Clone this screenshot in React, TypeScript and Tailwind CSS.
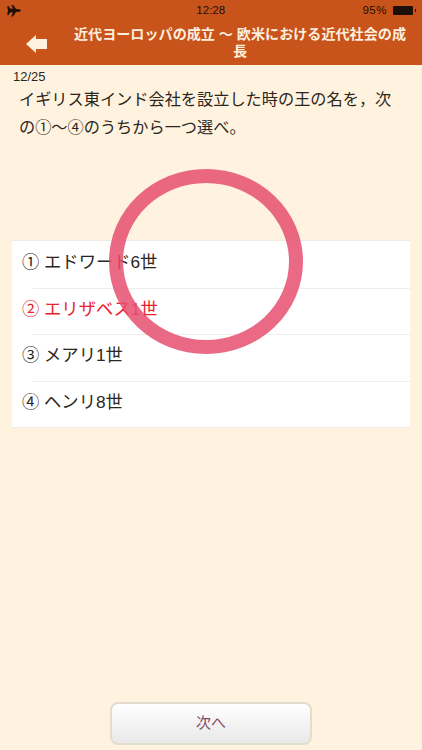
const font = { fontFamily: '"Liberation Sans", "Noto Sans CJK JP", sans-serif' };

const choices = [
  { label: '① エドワード6世', correct: false },
  { label: '② エリザベス1世', correct: true },
  { label: '③ メアリ1世', correct: false },
  { label: '④ ヘンリ8世', correct: false },
];

function Plane() {
  return (
    <svg width="14" height="12" viewBox="0 0 14 12" fill="#1d1008">
      <path d="M0.2 1.2 L1.6 0.9 L3 3.6 L6 3.8 L4.4 -0.2 L6 -0.2 L9 3.9 L12.4 4.2 C14.2 4.6 14.2 6.4 12.4 6.8 L9 7.1 L6 11.6 L4.4 11.6 L6 7.2 L3 7.4 L1.6 10 L0.2 9.8 L1 5.5 Z" />
    </svg>
  );
}

function Battery() {
  return (
    <div className="flex items-center">
      <div className="w-5 h-[9px] rounded-[1px] bg-[#1d1008]" />
      <div className="w-px h-[3px] bg-[#1d1008] ml-[2px]" />
    </div>
  );
}

export default function App() {
  return (
    <div className="w-[422px] h-[750px] flex flex-col overflow-hidden bg-[#fff3df]" style={font}>
      <header className="h-[65px] shrink-0 bg-[#c8531b] flex flex-col">
        <div className="h-[21px] shrink-0 pl-[7px] pr-[6px] flex items-center justify-between text-[11.5px] text-[#1d1008]">
          <Plane />
          <span className="ml-[38px]">12:28</span>
          <div className="flex items-center gap-[6px]">
            <span className="tracking-[0.5px]">95%</span>
            <Battery />
          </div>
        </div>
        <div className="flex-1 flex">
          <div className="w-[70px] shrink-0 flex items-center justify-start pl-[26px] pt-[1px]">
            <svg width="22" height="18" viewBox="0 0 22 18" fill="#fff3df">
              <path d="M0 9 L10 0 L10 4 L21 4 L21 14 L10 14 L10 18 Z" />
            </svg>
          </div>
          <h1 className="w-[340px] text-center text-[14.1px] leading-[17px] font-bold text-[#fdeedd] pt-[5px]">
            近代ヨーロッパの成立 〜 欧米における近代社会の成長
          </h1>
        </div>
      </header>

      <main className="flex-1 flex flex-col relative">
        <div className="pl-[13px] pt-[4px] text-[13px] leading-[16px] text-[#2c2620]">12/25</div>
        <p className="mx-[19px] text-[16.2px] leading-[28px] text-[#2c2620]">
          イギリス東インド会社を設立した時の王の名を，次の①〜④のうちから一つ選べ。
        </p>

        <ul className="mx-3 mt-[99px] bg-white border-y border-[#f0ebe2]">
          {choices.map((c, i) => (
            <li key={c.label} className="h-[46.5px] relative flex items-center pl-[10px] pb-[2px] text-[17.3px]">
              {i > 0 && <div className="absolute top-0 left-[21px] right-0 h-px bg-[#efeeec]" />}
              <span className={c.correct ? 'text-[#e8212f]' : 'text-[#2c2620]'}>{c.label}</span>
            </li>
          ))}
        </ul>

        {/* answer mark */}
        <div className="absolute left-[109px] top-[104px] w-[194px] h-[185px] rounded-[50%] border-[14px] border-[#e64f6e]/85" />

        <div className="mt-auto mb-[5px] flex justify-center">
          <button className="w-[202px] h-[43px] rounded-lg border-2 border-[#e3dccf] bg-gradient-to-b from-white to-[#e9e8e8] text-[15px] text-[#84495f]">
            次へ
          </button>
        </div>
      </main>
    </div>
  );
}
